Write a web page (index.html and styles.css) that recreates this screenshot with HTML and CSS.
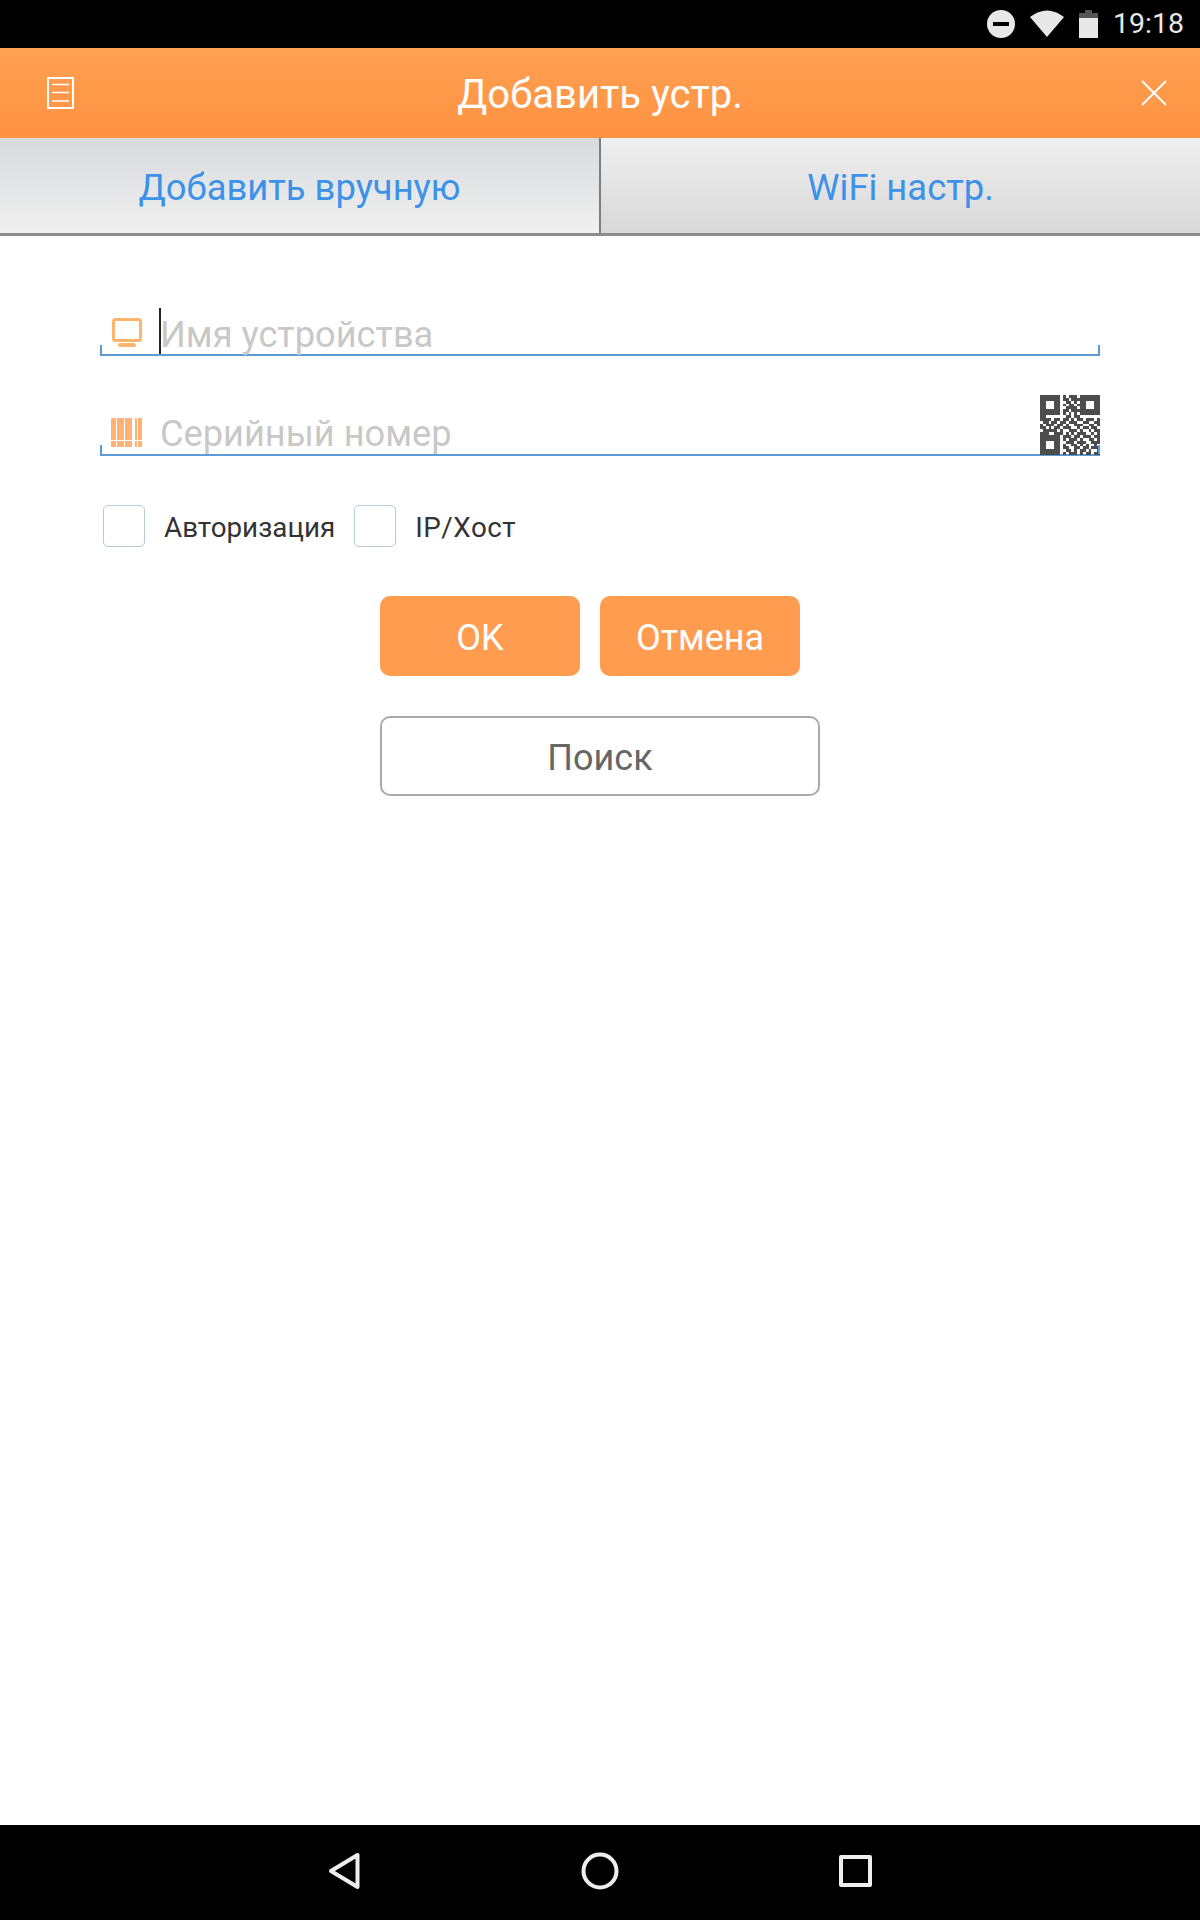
FILE: index.html
```html
<!DOCTYPE html>
<html>
<head>
    <title>Добавить устр.</title>
    <meta charset="utf-8">
    <meta name="viewport" content="width=device-width, initial-scale=1">
    <link rel="stylesheet" href="styles.css">
</head>
<body>
    <div class="status-bar">
        <svg class="status-icon dnd" width="28" height="28" viewBox="0 0 28 28">
            <circle cx="14" cy="14" r="14" fill="#e8e8e8"/>
            <rect x="6" y="12" width="16" height="4" fill="#000"/>
        </svg>
        <svg class="status-icon wifi" width="36" height="28" viewBox="0 0 36 28">
            <path d="M18 27 L1 7 Q18 -6 35 7 Z" fill="#e8e8e8"/>
        </svg>
        <svg class="status-icon battery" width="19" height="28" viewBox="0 0 19 28">
            <rect x="6" y="0" width="7" height="3" fill="#555"/>
            <rect x="0" y="3" width="19" height="6" fill="#555"/>
            <rect x="0" y="8" width="19" height="20" fill="#e8e8e8"/>
        </svg>
        <span class="clock">19:18</span>
    </div>

    <div class="header">
        <div class="header-side left">
            <svg width="27" height="32" viewBox="0 0 27 32" fill="none" stroke="#fff">
                <rect x="1" y="1" width="25" height="30" stroke-width="2"/>
                <path d="M5 7.500 H22 M5 15.500 H22 M5 24 H22" stroke-width="1.500"/>
            </svg>
        </div>
        <div class="title">Добавить устр.</div>
        <div class="header-side right">
            <svg width="26" height="26" viewBox="0 0 26 26" fill="none" stroke="#fff" stroke-width="2">
                <path d="M1 1 L25 25 M25 1 L1 25"/>
            </svg>
        </div>
    </div>

    <div class="tabs">
        <div class="tab active">Добавить вручную</div>
        <div class="tab">WiFi настр.</div>
    </div>

    <div class="content">
        <div class="field">
            <svg class="field-icon" width="30" height="29" viewBox="0 0 30 29">
                <rect x="1.500" y="1.500" width="27" height="21" rx="2" fill="none" stroke="#ffb46e" stroke-width="3"/>
                <rect x="6" y="25" width="18" height="4" rx="2" fill="#ffb46e"/>
            </svg>
            <span class="caret"></span>
            <span class="placeholder">Имя устройства</span>
        </div>
        <div class="field second">
            <svg class="field-icon" width="32" height="29" viewBox="0 0 32 29" fill="#ffb274">
                <path d="M1 1q0-1 1-1h4v29h-4q-1 0-1-1Z"/>
                <path d="M7 0h7v29h-7Z"/>
                <path d="M15 0h7v29h-7Z"/>
                <path d="M25 0h2v29h-2Z"/>
                <path d="M28 0h3q1 0 1 1v27q0 1-1 1h-3Z"/>
                <path d="M0 22h32v1h-32Z" fill="#fff"/>
            </svg>
            <span class="placeholder">Серийный номер</span>
            <svg class="qr" width="60" height="60" viewBox="0 0 21 21" fill="#4d4d4d" shape-rendering="crispEdges">
                <path fill-rule="evenodd" d="M0 0H7V7H0Z M2 2V5H5V2Z M14 0H21V7H14Z M16 2V5H19V2Z M0 14H7V21H0Z M2 16V19H5V16Z"/>
                <path d="M8 0h1v1h-1Z M10 0h3v1h-3Z M8 1h2v1h-2Z M11 1h3v1h-3Z M9 2h2v1h-2Z M12 2h1v1h-1Z M8 3h1v1h-1Z M10 3h2v1h-2Z M13 3h1v1h-1Z M9 4h4v1h-4Z M8 5h2v1h-2Z M11 5h3v1h-3Z M8 6h1v1h-1Z M10 6h1v1h-1Z M12 6h1v1h-1Z M0 7h2v1h-2Z M9 7h2v1h-2Z M12 7h2v1h-2Z"/>
                <path d="M0 8h4v1h-4Z M5 8h2v1h-2Z M8 8h2v1h-2Z M11 8h1v1h-1Z M13 8h2v1h-2Z M16 8h3v1h-3Z M20 8h1v1h-1Z M1 9h2v1h-2Z M4 9h2v1h-2Z M7 9h2v1h-2Z M10 9h3v1h-3Z M15 9h2v1h-2Z M19 9h2v1h-2Z M0 10h1v1h-1Z M2 10h3v1h-3Z M6 10h2v1h-2Z M9 10h1v1h-1Z M12 10h3v1h-3Z M17 10h2v1h-2Z M20 10h1v1h-1Z"/>
                <path d="M0 11h2v1h-2Z M3 11h1v1h-1Z M5 11h2v1h-2Z M8 11h3v1h-3Z M13 11h1v1h-1Z M15 11h2v1h-2Z M18 11h2v1h-2Z M1 12h5v1h-5Z M7 12h1v1h-1Z M10 12h3v1h-3Z M14 12h1v1h-1Z M17 12h1v1h-1Z M19 12h2v1h-2Z M0 13h3v1h-3Z M5 13h3v1h-3Z M9 13h1v1h-1Z M11 13h1v1h-1Z M13 13h3v1h-3Z M18 13h1v1h-1Z M20 13h1v1h-1Z"/>
                <path d="M8 14h3v1h-3Z M12 14h2v1h-2Z M15 14h3v1h-3Z M19 14h2v1h-2Z M8 15h1v1h-1Z M10 15h3v1h-3Z M14 15h1v1h-1Z M17 15h2v1h-2Z M20 15h1v1h-1Z M9 16h3v1h-3Z M13 16h3v1h-3Z M18 16h3v1h-3Z M8 17h1v1h-1Z M11 17h2v1h-2Z M14 17h1v1h-1Z M16 17h1v1h-1Z M19 17h1v1h-1Z M8 18h2v1h-2Z M12 18h2v1h-2Z M15 18h2v1h-2Z M18 18h3v1h-3Z M9 19h2v1h-2Z M12 19h1v1h-1Z M14 19h2v1h-2Z M17 19h1v1h-1Z M20 19h1v1h-1Z M8 20h1v1h-1Z M10 20h3v1h-3Z M14 20h1v1h-1Z M16 20h2v1h-2Z M19 20h2v1h-2Z"/>
            </svg>
        </div>

        <div class="check-row">
            <span class="checkbox"></span>
            <span class="check-label">Авторизация</span>
            <span class="checkbox"></span>
            <span class="check-label wide">IP/Хост</span>
        </div>

        <div class="button-row">
            <button class="btn primary">OK</button>
            <button class="btn primary">Отмена</button>
        </div>
        <button class="btn search">Поиск</button>
    </div>

    <div class="nav-bar">
        <svg width="33" height="40" viewBox="0 0 33 40" fill="none" stroke="#eee" stroke-width="4" stroke-linejoin="round">
            <path d="M29.500 4 V36 L3 20 Z"/>
        </svg>
        <svg width="38" height="40" viewBox="0 0 38 40" fill="none" stroke="#eee" stroke-width="4">
            <circle cx="19" cy="20" r="16.500"/>
        </svg>
        <svg width="33" height="40" viewBox="0 0 33 40" fill="none" stroke="#eee" stroke-width="4" stroke-linejoin="round">
            <rect x="2" y="6" width="29" height="28"/>
        </svg>
    </div>
</body>
</html>
```

FILE: styles.css
```css
html, body {
    margin: 0;
    padding: 0;
}
body {
    width: 1200px;
    height: 1920px;
    display: flex;
    flex-direction: column;
    font-family: Roboto, "Liberation Sans", sans-serif;
    background-color: #fff;
}
.status-bar {
    height: 48px;
    background-color: #000;
    display: flex;
    align-items: center;
    justify-content: flex-end;
    padding-right: 16px;
}
.status-icon.dnd {
    margin-right: 14px;
}
.status-icon.wifi {
    margin-right: 14px;
}
.status-icon.battery {
    margin-right: 15px;
}
.clock {
    color: #e8e8e8;
    font-size: 28.500px;
    line-height: 48px;
}
.header {
    height: 90px;
    display: flex;
    align-items: center;
    background: linear-gradient(#ffa052, #ff9242);
}
.header-side {
    width: 120px;
    display: flex;
    align-items: center;
    box-sizing: border-box;
}
.header-side.left {
    padding-left: 47px;
}
.header-side.right {
    justify-content: flex-end;
    padding-right: 33px;
}
.title {
    flex: 1;
    text-align: center;
    color: #fff;
    font-size: 40px;
    padding-top: 3px;
}
.tabs {
    height: 95px;
    display: flex;
    border-bottom: 3px solid #8c8c8c;
}
.tab {
    flex: 1;
    display: flex;
    align-items: center;
    justify-content: center;
    color: #3c92e8;
    font-size: 36.400px;
    padding-top: 3px;
    background: linear-gradient(#efefef, #d8d8d8);
}
.tab.active {
    border-right: 2px solid #7e7e7e;
    background: linear-gradient(#d8dadc, #f0f0f0);
}
.content {
    flex: 1;
    padding-top: 60px;
}
.field {
    position: relative;
    width: 1000px;
    height: 60px;
    margin-left: 100px;
    box-sizing: border-box;
    border-bottom: 2px solid #5b9bd8;
    display: flex;
    align-items: flex-end;
}
.field::before,
.field::after {
    content: "";
    position: absolute;
    bottom: 0;
    width: 2px;
    height: 9px;
    background-color: #5b9bd8;
}
.field::before {
    left: 0;
}
.field::after {
    right: 0;
}
.field.second {
    margin-top: 40px;
}
.field-icon {
    margin-left: 12px;
    margin-bottom: 7px;
    flex-shrink: 0;
}
.second .field-icon {
    margin-left: 10px;
}
.caret {
    position: absolute;
    left: 59px;
    bottom: 0;
    width: 2px;
    height: 46px;
    background-color: #222;
}
.placeholder {
    position: absolute;
    left: 60px;
    bottom: -4px;
    color: #c8c8c8;
    font-size: 36.200px;
    line-height: 46px;
}
.second .placeholder {
    bottom: -3px;
}
.qr {
    position: absolute;
    right: 0;
    bottom: -1px;
}
.check-row {
    display: flex;
    align-items: center;
    margin-top: 49px;
    margin-left: 103px;
}
.checkbox {
    width: 42px;
    height: 42px;
    box-sizing: border-box;
    border: 1px solid #b4c8d8;
    border-radius: 5px;
}
.check-label {
    color: #333;
    font-size: 27.800px;
    margin-left: 19px;
    margin-right: 19px;
    padding-top: 2px;
}
.check-label.wide {
    letter-spacing: 0.5px;
}
.button-row {
    display: flex;
    gap: 20px;
    margin-top: 49px;
    margin-left: 380px;
}
.btn {
    display: block;
    height: 80px;
    font-family: inherit;
    font-size: 36px;
    border-radius: 10px;
    padding: 4px 0 0;
}
.btn.primary {
    width: 200px;
    border: none;
    color: #fff;
    background-color: #ff9c50;
}
.btn.search {
    width: 440px;
    margin-top: 40px;
    margin-left: 380px;
    color: #666;
    background-color: #fff;
    border: 2px solid #aaa;
}
.nav-bar {
    height: 95px;
    background-color: #000;
    display: flex;
    justify-content: center;
    align-items: flex-start;
    gap: 220px;
    padding-top: 26px;
    box-sizing: border-box;
}
```
